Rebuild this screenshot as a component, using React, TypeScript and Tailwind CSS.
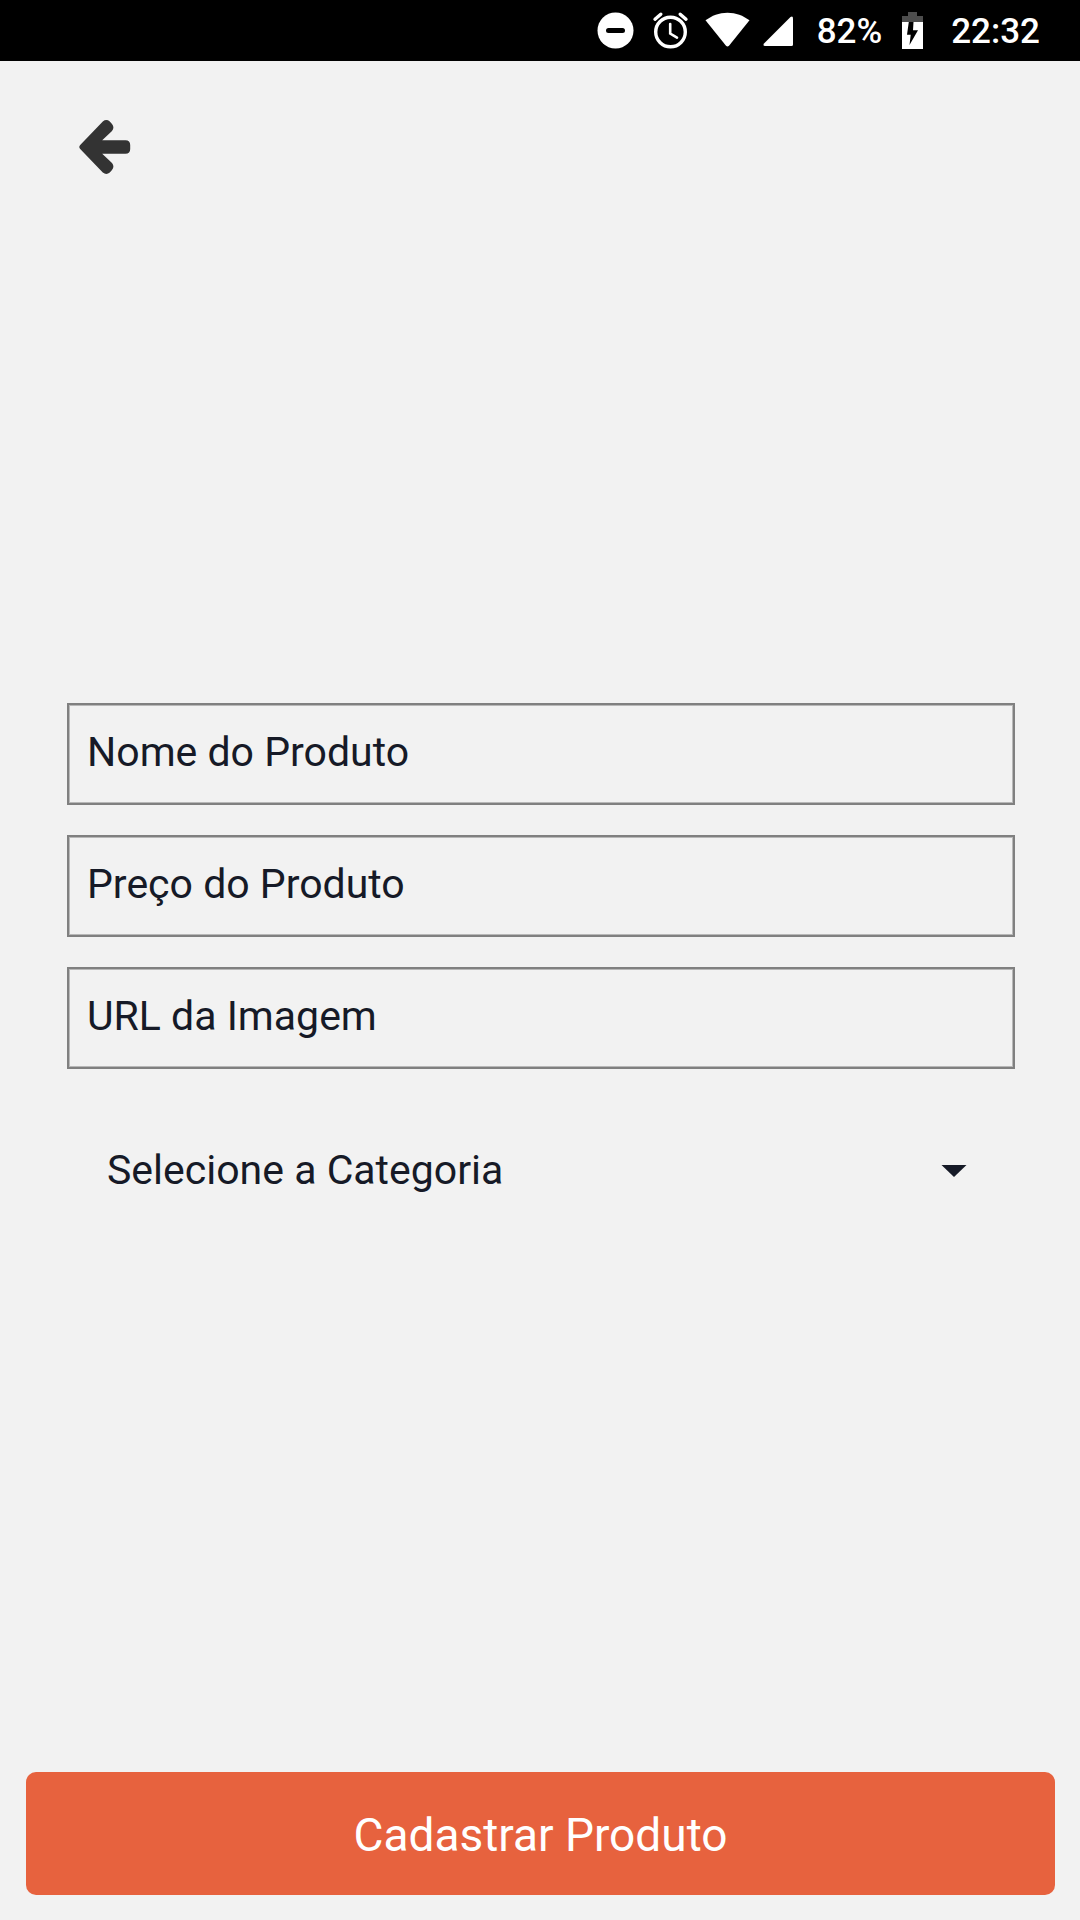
import React from "react";

function StatusBar() {
  return (
    <div className="flex h-[61px] items-center justify-end bg-black pr-10 text-[35px] font-medium text-white">
      <svg className="h-[61px] w-[203px]" viewBox="0 0 203 61" fill="#fff" aria-hidden="true">
        <circle cx="21.5" cy="30.5" r="18" />
        <rect x="12" y="28" width="19" height="5" rx="2.5" fill="#000" />
        <circle cx="76.500" cy="32" r="14.800" fill="none" stroke="#fff" strokeWidth="3.400" />
        <path
          d="M76.200 24v9.600l6.800 4"
          fill="none"
          stroke="#fff"
          strokeWidth="2.600"
          strokeLinecap="round"
        />
        <path
          d="M61 19.200l5.800-5M92 19.200l-5.800-5"
          fill="none"
          stroke="#fff"
          strokeWidth="3.400"
          strokeLinecap="round"
        />
        <path d="M111.500 20.300C118 15.500 125 12.700 133.500 12.700S149 15.500 155.500 20.300L135 45.800q-1.500 1.600-3 0z" />
        <path d="M199 18.400V44.500q0 1.500-1.500 1.500H171q-2.500-.5-1-2.500L196.500 16.900q2.500-1.500 2.500 1.500z" />
      </svg>
      <span className="ml-5 pt-1">82%</span>
      <svg className="ml-5 h-[37px] w-[21px]" viewBox="0 0 21 37" role="img" aria-label="Carregando">
        <path d="M6 0h9v4h6v6H0V4h6z" fill="#4d4d4d" />
        <path d="M0 10h21v27H0z" fill="#fff" />
        <path d="M6.800 10h4.700l-.5 8.200h5L7.500 33l1.200-10.200H5z" fill="#000" />
      </svg>
      <span className="ml-7 pt-1">22:32</span>
    </div>
  );
}

function Field({ label, type }: { label: string; type: string }) {
  return (
    <input
      type={type}
      aria-label={label}
      placeholder={label}
      className="h-[102px] w-full border-2 border-[#808080] bg-transparent pb-1 pl-[18px] pr-4 text-[41px] text-[#161a27] shadow-[inset_0_0_0_1px_#b8b8b8] outline-none placeholder:text-[#161a27]"
    />
  );
}

export default function App() {
  return (
    <div className="flex min-h-screen flex-col bg-[#f2f2f2] font-[Roboto,sans-serif]">
      <StatusBar />
      <header className="flex px-[79px] pt-[59px]">
        <button type="button" aria-label="Voltar">
          <svg className="h-[54px] w-[52px]" viewBox="0 0 52 54" fill="#333" aria-hidden="true">
            <path d="M1.200 25 L23.800 1.500 Q27.300 -1.300 30.800 1.500 L33 3.900 Q35.800 7.500 33 11.100 L23.200 20.300 H46.500 Q51.200 20.300 51.200 25 V29 Q51.200 33.700 46.500 33.700 H23.200 L33 42.900 Q35.800 46.500 33 50.100 L30.800 52.500 Q27.300 55.300 23.800 52.500 L1.200 29 Q-.6 27 1.200 25z" />
          </svg>
        </button>
      </header>
      <main className="flex flex-1 flex-col justify-center pl-[67px] pr-[65px]">
        <form id="produto" className="flex flex-col gap-[30px]">
          <Field label="Nome do Produto" type="text" />
          <Field label="Preço do Produto" type="text" />
          <Field label="URL da Imagem" type="url" />
          <div className="relative">
            <select
              aria-label="Categoria"
              className="h-[145px] w-full appearance-none bg-transparent px-10 text-[41px] text-[#161a27] outline-none"
            >
              <option>Selecione a Categoria</option>
            </select>
            <svg
              className="pointer-events-none absolute inset-y-0 right-12 my-auto h-3 w-[26px]"
              viewBox="0 0 26 12"
              fill="#161a27"
              aria-hidden="true"
            >
              <path d="M.5 0h25L13 12z" />
            </svg>
          </div>
        </form>
      </main>
      <footer className="px-[25px] pb-[25px] pl-[26px]">
        <button
          type="submit"
          form="produto"
          className="h-[123px] w-full rounded-[10px] bg-[#e7623e] pt-1 text-[46px] text-white"
        >
          Cadastrar Produto
        </button>
      </footer>
    </div>
  );
}
